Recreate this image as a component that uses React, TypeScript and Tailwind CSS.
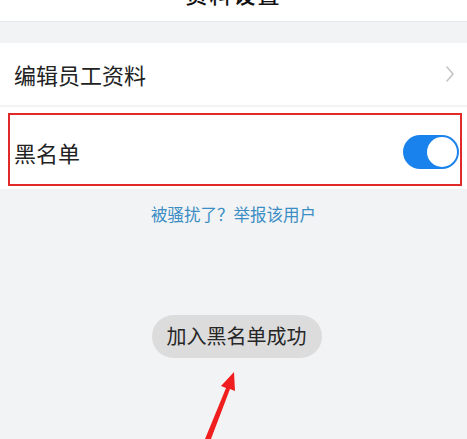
import React from 'react';

export default function App() {
  return (
    <div
      className="relative w-[467px] h-[439px] overflow-hidden bg-[#f2f3f5]"
      style={{ fontFamily: '"Noto Sans CJK SC", "Noto Sans", sans-serif' }}
    >
      {/* Header (cut off at the top) */}
      <div className="relative -mt-[35px] h-[57px] bg-white border-b border-[#e6e7ea] flex items-center justify-center">
        <span className="absolute left-[30px] top-[12px] text-[26px] leading-none text-[#333]">‹</span>
        <span className="text-[22px] leading-none font-medium text-[#111] tracking-[2px]">资料设置</span>
      </div>

      {/* Gap */}
      <div className="h-[21px]" />

      {/* Edit row */}
      <div className="h-[62px] bg-white flex items-center justify-between pl-[14px] pr-[12px]">
        <span className="text-[22px] text-[#222]">编辑员工资料</span>
        <svg width="10" height="18" viewBox="0 0 10 18" className="text-[#c4c4c6]">
          <path d="M2 2l6 7-6 7" fill="none" stroke="currentColor" strokeWidth="1.6" strokeLinecap="round" strokeLinejoin="round" />
        </svg>
      </div>

      <div className="h-[2px]" />

      {/* Blacklist row */}
      <div className="relative h-[82px] pt-[8px] bg-white flex items-center justify-between pl-[14px] pr-[8px]">
        <span className="text-[22px] text-[#222]">黑名单</span>
        <div className="w-[56px] h-[34px] rounded-full bg-[#1a82ec] flex items-center justify-end p-[2px]">
          <div className="w-[30px] h-[30px] rounded-full bg-white" />
        </div>
        {/* Red annotation box */}
        <div className="absolute left-[8px] right-[5px] top-[6px] bottom-[3px] border-2 border-[#e02a2a] pointer-events-none" />
      </div>

      {/* Report link */}
      <div className="mt-[13px] text-center text-[16.5px] text-[#3b8ec4]">被骚扰了？举报该用户</div>

      {/* Toast */}
      <div className="mt-[88px] flex justify-center pl-[6px]">
        <div className="h-[43px] px-[15px] rounded-full bg-[#dcdcdd] flex items-center text-[20px] text-[#262626]">
          加入黑名单成功
        </div>
      </div>

      {/* Red arrow annotation */}
      <svg className="absolute left-0 top-0" width="467" height="439" viewBox="0 0 467 439">
        <path d="M205 439 L226 388 L221 386 L234 372 L235 391 L230 389 L211 439 Z" fill="#f01e1e" />
      </svg>
    </div>
  );
}
